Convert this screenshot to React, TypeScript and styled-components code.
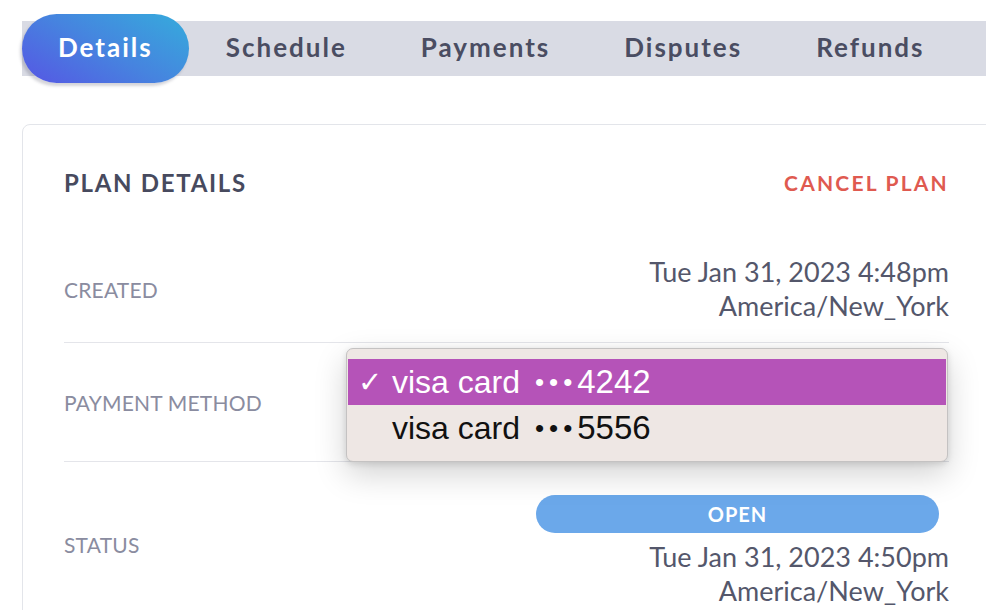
import React from "react";
import styled, { createGlobalStyle } from "styled-components";

const Global = createGlobalStyle`
  html, body { margin: 0; padding: 0; background: #ffffff; }
  body { font-family: Lato, "Open Sans", sans-serif; overflow: hidden; }
`;

const Page = styled.div`
  width: 986px;
  height: 610px;
  overflow: hidden;
  padding: 21px 0 0 22px;
  box-sizing: border-box;
`;

const TabBar = styled.div`
  display: flex;
  align-items: center;
  height: 55px;
  background: #d9dbe4;
  width: 1000px;
`;

const Tab = styled.div<{ $active?: boolean }>`
  display: flex;
  align-items: center;
  justify-content: center;
  padding: 0 ${(p) => (p.$active ? "36px" : "37px")} 3px;
  height: ${(p) => (p.$active ? "69px" : "55px")};
  border-radius: 35px;
  font-family: Lato, sans-serif;
  font-weight: 700;
  font-size: 26px;
  letter-spacing: 2px;
  color: ${(p) => (p.$active ? "#ffffff" : "#4a4d62")};
  background: ${(p) =>
    p.$active ? "linear-gradient(30deg, #5656e4 0%, #4684df 50%, #35acdc 100%)" : "transparent"};
  box-shadow: ${(p) => (p.$active ? "-2px 3px 3px rgba(60,60,80,0.22)" : "none")};
  box-sizing: border-box;
`;

const Card = styled.div`
  margin-top: 48px;
  width: 1020px;
  border: 1.5px solid #e3e5ea;
  border-radius: 8px;
  padding: 0 0 0 41px;
  box-sizing: border-box;
`;

const Inner = styled.div`
  width: 885px;
`;

const Header = styled.div`
  display: flex;
  justify-content: space-between;
  align-items: center;
  height: 36px;
  padding-top: 39px;
  margin-bottom: 36px;
`;

const Title = styled.div`
  font-weight: 700;
  font-size: 24px;
  letter-spacing: 1.7px;
  color: #474a5e;
`;

const CancelLink = styled.div`
  font-weight: 700;
  font-size: 21px;
  letter-spacing: 2.2px;
  color: #df5a50;
`;

const Row = styled.div<{ $pt: number; $pb: number; $minH?: number; $border?: boolean }>`
  position: relative;
  display: flex;
  justify-content: space-between;
  align-items: center;
  padding: ${(p) => `${p.$pt}px 0 ${p.$pb}px`};
  min-height: ${(p) => (p.$minH ? `${p.$minH}px` : "auto")};
  border-bottom: ${(p) => (p.$border ? "1.5px solid #e4e5ea" : "none")};
  box-sizing: border-box;
`;

const Label = styled.div<{ $shift?: number }>`
  font-size: 21px;
  color: #8a8ca0;
  letter-spacing: 0.2px;
  margin-top: ${(p) => (p.$shift ? `${p.$shift}px` : "0")};
`;

const ValueCol = styled.div`
  display: flex;
  flex-direction: column;
  align-items: flex-end;
`;

const Value = styled.div`
  font-size: 27px;
  line-height: 34px;
  color: #54576b;
  text-align: right;
`;

const StatusPill = styled.div`
  width: 403px;
  height: 38px;
  border-radius: 19px;
  background: #6ba8ea;
  color: #ffffff;
  font-weight: 700;
  font-size: 20px;
  letter-spacing: 1px;
  display: flex;
  align-items: center;
  justify-content: center;
  margin-right: 10px;
  margin-bottom: 7px;
`;

const Menu = styled.div`
  position: absolute;
  left: 282px;
  top: 5px;
  width: 602px;
  box-sizing: border-box;
  padding: 10px 1px;
  background: #eee7e4;
  border: 1px solid #c4c2c2;
  border-radius: 7px;
  box-shadow: 0 12px 32px rgba(0, 0, 0, 0.18), 0 2px 6px rgba(0, 0, 0, 0.12);
  z-index: 2;
`;

const Option = styled.div<{ $selected?: boolean }>`
  display: flex;
  align-items: center;
  height: 46px;
  padding-left: 10px;
  font-family: "Liberation Sans", Arial, sans-serif;
  font-size: 32px;
  white-space: pre;
  color: ${(p) => (p.$selected ? "#ffffff" : "#111111")};
  background: ${(p) => (p.$selected ? "#b553b8" : "transparent")};
`;

const Check = styled.span`
  display: inline-block;
  width: 34px;
  font-size: 29px;
`;

const Dots = styled.span`
  font-size: 26px;
  letter-spacing: 5px;
  margin: 0 0 0 6px;
`;

const Digits = styled.span`
  font-size: 33px;
`;

const options = [
  { name: "visa card", last4: "4242", selected: true },
  { name: "visa card", last4: "5556", selected: false },
];

export default function App() {
  return (
    <>
      <Global />
      <Page>
        <TabBar>
          <Tab $active>Details</Tab>
          <Tab>Schedule</Tab>
          <Tab>Payments</Tab>
          <Tab>Disputes</Tab>
          <Tab>Refunds</Tab>
        </TabBar>
        <Card>
          <Inner>
            <Header>
              <Title>PLAN DETAILS</Title>
              <CancelLink>CANCEL PLAN</CancelLink>
            </Header>
            <Row $pt={19} $pb={19} $border>
              <Label>CREATED</Label>
              <ValueCol>
                <Value>Tue Jan 31, 2023 4:48pm</Value>
                <Value>America/New_York</Value>
              </ValueCol>
            </Row>
            <Row $pt={0} $pb={0} $minH={119} $border>
              <Label>PAYMENT METHOD</Label>
              <Menu>
                {options.map((o) => (
                  <Option key={o.last4} $selected={o.selected}>
                    <Check>{o.selected ? "✓" : ""}</Check>
                    {o.name + " "}
                    <Dots>•••</Dots>
                    <Digits>{o.last4}</Digits>
                  </Option>
                ))}
              </Menu>
            </Row>
            <Row $pt={33} $pb={20}>
              <Label $shift={-14}>STATUS</Label>
              <ValueCol>
                <StatusPill>OPEN</StatusPill>
                <Value>Tue Jan 31, 2023 4:50pm</Value>
                <Value>America/New_York</Value>
              </ValueCol>
            </Row>
          </Inner>
        </Card>
      </Page>
    </>
  );
}
